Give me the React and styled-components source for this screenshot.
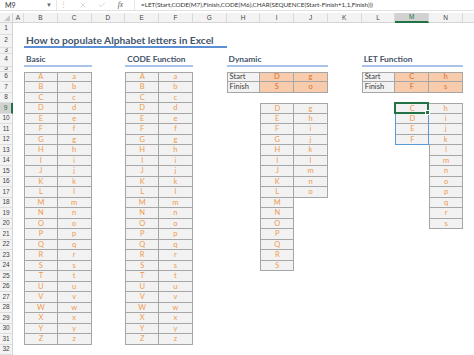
import React from "react";
import styled, { createGlobalStyle } from "styled-components";
import { X, Check } from "lucide-react";

const GlobalStyle = createGlobalStyle`
  html, body {
    margin: 0;
    padding: 0;
    background: #ffffff;
  }
  body {
    width: 474px;
    height: 355px;
    overflow: hidden;
    font-family: Lato, "Open Sans", "Liberation Sans", sans-serif;
  }
`;

const UPPER = "ABCDEFGHIJKLMNOPQRSTUVWXYZ".split("");
const LOWER = "abcdefghijklmnopqrstuvwxyz".split("");
const ALL = UPPER.concat(LOWER);
const COLUMNS = "ABCDEFGHIJKLMNO".split("");
const ROWS = Array.from({ length: 32 }, (_, i) => i + 1);

const FORMULA =
  "=LET(Start,CODE(M7),Finish,CODE(M6),CHAR(SEQUENCE(Start-Finish+1,1,Finish)))";

// grid track for a sheet column letter (track 1 is the row header)
const track = col => col.charCodeAt(0) - 63;

const range = (from, to) => ALL.slice(ALL.indexOf(from), ALL.indexOf(to) + 1);

const buildCells = () => {
  const list = [];
  const column = (col, start, values, variant = "data") =>
    values.forEach((text, i) => list.push({ col, row: start + i, text, variant }));

  column("B", 6, UPPER);
  column("C", 6, LOWER);
  column("E", 6, UPPER);
  column("F", 6, LOWER);

  column("H", 6, ["Start", "Finish"], "label");
  column("I", 6, ["D", "S"], "input");
  column("J", 6, ["g", "o"], "input");
  column("I", 9, range("D", "S"));
  column("J", 9, range("g", "o"));

  column("L", 6, ["Start", "Finish"], "label");
  column("M", 6, ["C", "F"], "input");
  column("N", 6, ["h", "s"], "input");
  column("M", 9, range("C", "F"));
  column("N", 9, range("h", "s"));

  // only draw the top / left edge where no bordered cell sits next to it
  const taken = new Set(list.map(c => c.col + c.row));
  return list.map(c => ({
    ...c,
    top: !taken.has(c.col + (c.row - 1)),
    left: !taken.has(String.fromCharCode(c.col.charCodeAt(0) - 1) + c.row),
  }));
};

const CELLS = buildCells();

const Window = styled.div`
  display: flex;
  flex-direction: column;
  width: 474px;
  height: 355px;
  overflow: hidden;
  background: #ffffff;
`;

const FormulaBar = styled.div`
  display: flex;
  align-items: center;
  height: 15px;
  border-bottom: 1px solid #e1e1e1;
  margin-bottom: 2px;
  font-size: 7px;
  color: #333333;
`;

const NameBox = styled.div`
  display: flex;
  align-items: center;
  justify-content: space-between;
  width: 57px;
  height: 100%;
  box-sizing: border-box;
  padding: 0 4px 0 5px;
  border-right: 1px solid #e6e6e6;
`;

const Caret = styled.span`
  font-size: 6px;
  color: #666666;
`;

const Dots = styled.span`
  width: 13px;
  text-align: center;
  color: #b0b0b0;
  font-size: 7px;
`;

const BarButtons = styled.div`
  display: flex;
  align-items: center;
  margin-left: 3px;
`;

const BarButton = styled.span`
  display: flex;
  align-items: center;
  justify-content: center;
  width: 19px;
  color: ${p => (p.$muted ? "#b3b3b3" : "#555555")};
  font-family: "Liberation Serif", serif;
  font-style: italic;
  font-size: 7.5px;
`;

const FormulaText = styled.div`
  flex: 1;
  height: 100%;
  display: flex;
  align-items: center;
  margin-left: 4px;
  padding-left: 6px;
  border-left: 1px solid #e6e6e6;
  white-space: nowrap;
  font-size: 6.3px;
  color: #333333;
`;

const Sheet = styled.div`
  display: grid;
  grid-template-columns: 13px 11px repeat(14, 33.77px);
  grid-template-rows: 10px 12px 13px 6px 13px 5px repeat(27, 10.5px);
  font-size: 7.5px;
`;

const Corner = styled.div`
  grid-column: 1 / span 2;
  grid-row: 1;
  display: flex;
  background: #f3f3f3;
  border-bottom: 1px solid #d4d4d4;
`;

const CornerBox = styled.div`
  position: relative;
  width: 13px;
  height: 100%;
  box-sizing: border-box;
  border-right: 1px solid #d4d4d4;
  &::after {
    content: "";
    position: absolute;
    right: 2px;
    bottom: 1px;
    border-left: 6px solid transparent;
    border-bottom: 6px solid #c8c8c8;
  }
`;

const ColHeader = styled.div`
  grid-column: ${p => p.$track};
  grid-row: 1;
  display: flex;
  align-items: center;
  justify-content: center;
  box-sizing: border-box;
  background: ${p => (p.$active ? "#d2d2d2" : "#f3f3f3")};
  border-right: 1px solid #dadada;
  border-bottom: ${p => (p.$active ? "2px solid #217346" : "1px solid #d4d4d4")};
  color: ${p => (p.$active ? "#217346" : "#444444")};
  font-family: "Liberation Sans", sans-serif;
  font-size: 6.5px;
`;

const RowHeader = styled.div`
  grid-column: 1;
  grid-row: ${p => p.$row + 1};
  display: flex;
  align-items: center;
  justify-content: center;
  overflow: hidden;
  box-sizing: border-box;
  background: ${p => (p.$active ? "#d2d2d2" : "#f3f3f3")};
  border-bottom: 1px solid #dedede;
  border-right: ${p => (p.$active ? "2px solid #217346" : "1px solid #d4d4d4")};
  color: ${p => (p.$active ? "#217346" : "#444444")};
  font-family: "Liberation Sans", sans-serif;
  font-size: 6.5px;
  line-height: 1;
`;

const Title = styled.div`
  grid-column: 3 / span 6;
  grid-row: 3;
  display: flex;
  align-items: center;
  padding-left: 2px;
  border-bottom: 2px solid #5b8fd4;
  color: #44546a;
  font-weight: 700;
  font-size: 10.2px;
  white-space: nowrap;
`;

const Heading = styled.div`
  grid-column: ${p => p.$from} / span ${p => p.$span};
  grid-row: 5;
  display: flex;
  align-items: center;
  padding-left: 2px;
  border-bottom: 2px solid #a9c4e8;
  color: #44546a;
  font-weight: 700;
  font-size: 8.4px;
  white-space: nowrap;
`;

const BORDER = "1px solid #a6a6a6";

const Cell = styled.div`
  grid-column: ${p => p.$track};
  grid-row: ${p => p.$row + 1};
  display: flex;
  align-items: center;
  justify-content: ${p => (p.$variant === "label" ? "flex-start" : "center")};
  box-sizing: border-box;
  padding-left: ${p => (p.$variant === "label" ? "2px" : "0")};
  border-right: ${BORDER};
  border-bottom: ${BORDER};
  border-top: ${p => (p.$top ? BORDER : "0")};
  border-left: ${p => (p.$left ? BORDER : "0")};
  background: ${p => (p.$variant === "input" ? "#f8cbad" : "#f2f2f2")};
  color: ${p =>
    p.$variant === "label" ? "#3a3a3a" : p.$variant === "input" ? "#d6702c" : "#f09a4c"};
  font-size: 7.5px;
  line-height: 1;
`;

const SpillRange = styled.div`
  grid-column: ${p => p.$track};
  grid-row: ${p => p.$row + 1} / span ${p => p.$span};
  border: 1px solid #5b9bd5;
  box-sizing: border-box;
  pointer-events: none;
`;

const Selection = styled.div`
  grid-column: ${p => p.$track};
  grid-row: ${p => p.$row + 1};
  position: relative;
  margin: -1px 0 0 -1px;
  border: 2px solid #217346;
  pointer-events: none;
  &::after {
    content: "";
    position: absolute;
    right: -3px;
    bottom: -3px;
    width: 3px;
    height: 3px;
    background: #217346;
    border: 1px solid #ffffff;
  }
`;

const App = () => {
  return (
    <>
      <GlobalStyle />
      <Window>
        <FormulaBar>
          <NameBox>
            M9
            <Caret>▼</Caret>
          </NameBox>
          <Dots>⋮</Dots>
          <BarButtons>
            <BarButton $muted>
              <X size={8} strokeWidth={1.5} />
            </BarButton>
            <BarButton $muted>
              <Check size={8} strokeWidth={1.5} />
            </BarButton>
            <BarButton>fx</BarButton>
          </BarButtons>
          <FormulaText>{FORMULA}</FormulaText>
        </FormulaBar>

        <Sheet>
          <Corner>
            <CornerBox />
          </Corner>
          {COLUMNS.map(col => (
            <ColHeader key={col} $track={track(col)} $active={col === "M"}>
              {col}
            </ColHeader>
          ))}
          {ROWS.map(row => (
            <RowHeader key={row} $row={row} $active={row === 9}>
              {row}
            </RowHeader>
          ))}

          <Title>How to populate Alphabet letters in Excel</Title>
          <Heading $from={track("B")} $span={2}>Basic</Heading>
          <Heading $from={track("E")} $span={2}>CODE Function</Heading>
          <Heading $from={track("H")} $span={3}>Dynamic</Heading>
          <Heading $from={track("L")} $span={3}>LET Function</Heading>

          {CELLS.map(c => (
            <Cell
              key={c.col + c.row}
              $track={track(c.col)}
              $row={c.row}
              $variant={c.variant}
              $top={c.top}
              $left={c.left}
            >
              {c.text}
            </Cell>
          ))}

          <SpillRange $track={track("M")} $row={9} $span={4} />
          <Selection $track={track("M")} $row={9} />
        </Sheet>
      </Window>
    </>
  );
};

export default App;
